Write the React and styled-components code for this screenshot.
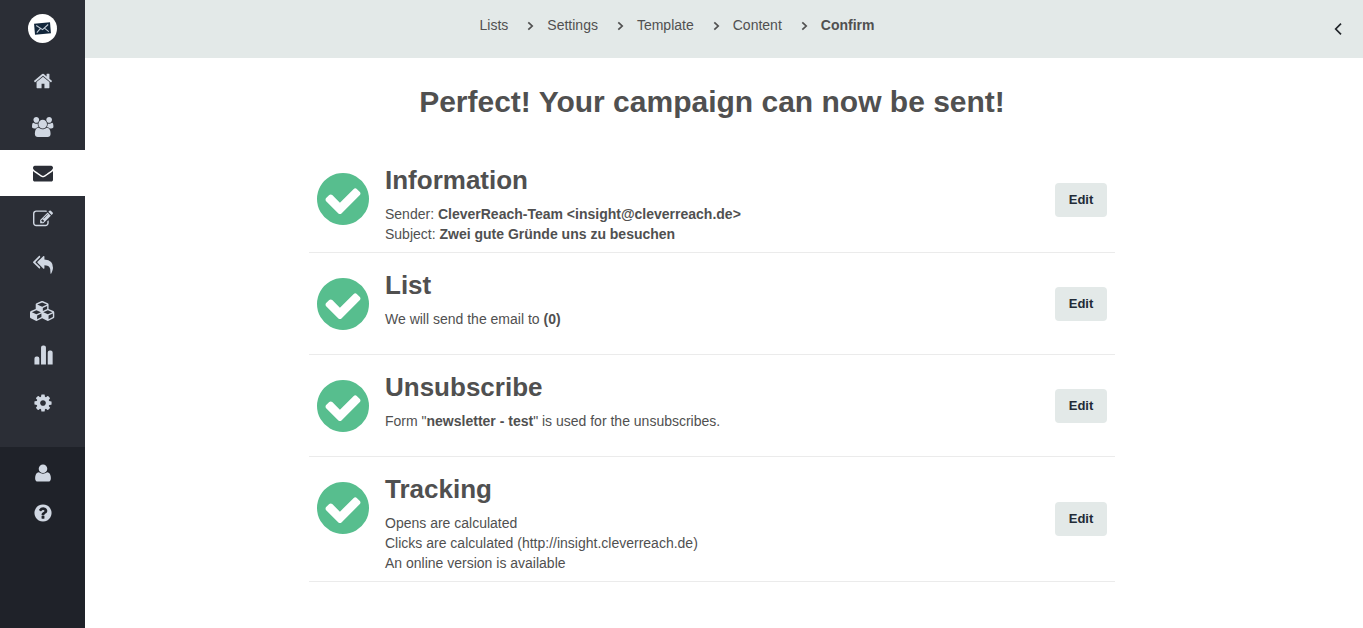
import React from 'react';
import styled, { createGlobalStyle } from 'styled-components';

const icons = {
  home: {
    width: 1792,
    d: 'M1472 992v480q0 26-19 45t-45 19h-384v-384h-256v384h-384q-26 0-45-19t-19-45v-480q0-1 .5-3t.5-3l575-474 575 474q1 2 1 6zm223-69l-62 74q-8 9-21 11h-3q-13 0-21-7l-692-577-692 577q-12 8-24 7-13-2-21-11l-62-74q-8-10-7-23.5t11-21.5l719-599q32-26 76-26t76 26l244 204v-195q0-14 9-23t23-9h192q14 0 23 9t9 23v408l219 182q10 8 11 21.5t-7 23.5z',
  },
  users: {
    width: 1920,
    d: 'M593 896q-162 5-265 128h-134q-82 0-138-40.5t-56-118.5q0-353 124-353 6 0 43.5 21t97.5 42.5 119 21.5q67 0 133-23-5 37-5 66 0 139 81 256zm1071 637q0 120-73 189.5t-194 69.5h-874q-121 0-194-69.5t-73-189.5q0-53 3.5-103.5t14-109 26.5-108.5 43-97.5 62-81 85.5-53.5 111.5-20q10 0 43 21.5t73 48 107 48 135 21.5 135-21.5 107-48 73-48 43-21.5q61 0 111.5 20t85.5 53.5 62 81 43 97.5 26.5 108.5 14 109 3.5 103.5zm-1024-1277q0 106-75 181t-181 75-181-75-75-181 75-181 181-75 181 75 75 181zm704 384q0 159-112.5 271.5t-271.5 112.5-271.5-112.5-112.5-271.5 112.5-271.5 271.5-112.5 271.5 112.5 112.5 271.5zm576 225q0 78-56 118.5t-138 40.5h-134q-103-123-265-128 81-117 81-256 0-29-5-66 66 23 133 23 59 0 119-21.5t97.5-42.5 43.5-21q124 0 124 353zm-128-609q0 106-75 181t-181 75-181-75-75-181 75-181 181-75 181 75 75 181z',
  },
  envelope: {
    width: 1792,
    d: 'M1792 710v794q0 66-47 113t-113 47h-1472q-66 0-113-47t-47-113v-794q44 49 101 87 362 246 497 345 57 42 92.5 65.5t94.5 48 110 24.5h2q51 0 110-24.5t94.5-48 92.5-65.5q170-123 498-345 57-39 100-87zm0-294q0 79-49 151t-122 123q-376 261-468 325-10 7-42.5 31t-54 38.5-52 32.5-57.5 27-50 9h-2q-23 0-50-9t-57.5-27-52-32.5-54-38.5-42.5-31q-91-64-262-182.5t-205-142.5q-62-42-117-115.5t-55-136.5q0-78 41.5-130t118.5-52h1472q65 0 112.5 47t47.5 113z',
  },
  edit: {
    width: 1792,
    d: 'M888 1184l116-116-152-152-116 116v56h96v96h56zm440-720q-16-16-33 1l-350 350q-17 17-1 33t33-1l350-350q17-17 1-33zm80 594v190q0 119-84.5 203.5t-203.5 84.5h-832q-119 0-203.5-84.5t-84.5-203.5v-832q0-119 84.5-203.5t203.5-84.5h832q63 0 117 25 15 7 18 23 3 17-9 29l-49 49q-14 14-32 8-23-6-45-6h-832q-66 0-113 47t-47 113v832q0 66 47 113t113 47h832q66 0 113-47t47-113v-126q0-13 9-22l64-64q15-15 35-7t20 29zm-96-738l288 288-672 672h-288v-288zm444 132l-92 92-288-288 92-92q28-28 68-28t68 28l152 152q28 28 28 68t-28 68z',
  },
  replyAll: {
    width: 1792,
    d: 'M640 1082v70q0 42-39 59-13 5-25 5-27 0-45-19l-512-512q-19-19-19-45t19-45l512-512q29-31 70-14 39 17 39 59v69l-397 398q-19 19-19 45t19 45zm1152 58q0 58-17 133.5t-38.5 138-48 125-40.5 90.5l-20 40q-8 17-28 17-6 0-9-1-25-8-23-34 43-400-106-565-64-71-170.5-110.5t-267.5-52.5v251q0 42-39 59-13 5-25 5-27 0-45-19l-512-512q-19-19-19-45t19-45l512-512q29-31 70-14 39 17 39 59v262q411 28 599 221 169 173 169 509z',
  },
  cubes: {
    width: 2304,
    d: 'M640 1632l384-192v-314l-384 164v342zm-64-454l404-173-404-173-404 173zm1088 454l384-192v-314l-384 164v342zm-64-454l404-173-404-173-404 173zm-448-293l384-165v-266l-384 164v267zm-64-379l441-189-441-189-441 189zm1088 518v416q0 36-19 67t-52 47l-448 224q-25 14-57 14t-57-14l-448-224q-5-2-7-4-2 2-7 4l-448 224q-25 14-57 14t-57-14l-448-224q-33-16-52-47t-19-67v-416q0-38 21.5-70t56.5-48l434-186v-400q0-38 21.5-70t56.5-48l448-192q23-10 50-10t50 10l448 192q35 16 56.5 48t21.5 70v400l434 186q36 16 57 48t21 70z',
  },
  chart: {
    width: 1792,
    d: 'M130 1560v-540q0-180 180-180h80q180 0 180 180v540zM720 1560v-1520q0-180 180-180h80q180 0 180 180v1520zM1320 1560v-1060q0-180 180-180h80q180 0 180 180v1060z',
  },
  cog: {
    width: 1792,
    d: 'M1152 896q0-106-75-181t-181-75-181 75-75 181 75 181 181 75 181-75 75-181zm512-109v222q0 12-8 23t-20 13l-185 28q-19 54-39 91 35 50 107 138 10 12 10 25t-9 23q-27 37-99 108t-94 71q-12 0-26-9l-138-108q-44 23-91 38-16 136-29 186-7 28-36 28h-222q-14 0-24.5-8.5t-11.5-21.5l-28-184q-49-16-90-37l-141 107q-10 9-25 9-14 0-25-11-126-114-165-168-7-10-7-23 0-12 8-23 15-21 51-66.5t54-70.5q-27-50-41-99l-183-27q-13-2-21-12.5t-8-23.5v-222q0-12 8-23t19-13l186-28q14-46 39-92-40-57-107-138-10-12-10-24 0-10 9-23 26-36 98.5-107.5t94.5-71.5q13 0 26 10l138 107q44-23 91-38 16-136 29-186 7-28 36-28h222q14 0 24.5 8.5t11.5 21.5l28 184q49 16 90 37l142-107q9-9 24-9 13 0 25 10 129 119 165 170 7 8 7 22 0 12-8 23-15 21-51 66.5t-54 70.5q26 50 41 98l183 28q13 2 21 12.5t8 23.5z',
  },
  user: {
    width: 1792,
    d: 'M1600 1399q0 109-62.5 187t-150.5 78h-982q-88 0-150.5-78t-62.5-187q0-85 8.5-160.5t31.5-152 58.5-131 94-89 134.5-34.5q195 128 377 128t377-128q76 0 134.5 34.5t94 89 58.5 131 31.5 152 8.5 160.5zm-320-887q0 159-112.5 271.5t-271.5 112.5-271.5-112.5-112.5-271.5 112.5-271.5 271.5-112.5 271.5 112.5 112.5 271.5z',
  },
  help: {
    width: 1792,
    d: 'M1024 1376v-192q0-14-9-23t-23-9h-192q-14 0-23 9t-9 23v192q0 14 9 23t23 9h192q14 0 23-9t9-23zm256-672q0-88-55.5-163t-138.5-116-170-41q-243 0-371 213-15 24 8 42l132 100q7 6 19 6 16 0 25-12 53-68 86-92 34-24 86-24 48 0 85.5 26t37.5 59q0 38-20 61t-68 45q-63 28-115.5 86.5t-52.5 125.5v36q0 14 9 23t23 9h192q14 0 23-9t9-23q0-19 21.5-49.5t54.5-49.5q32-18 49-28.5t46-35 44.5-48 28-60.5 12.5-81zm384 192q0 209-103 385.5t-279.5 279.5-385.5 103-385.5-103-279.5-279.5-103-385.5 103-385.5 279.5-279.5 385.5-103 385.5 103 279.5 279.5 103 385.5z',
  },
};

const mainLinks = [
  { icon: 'home', label: 'Dashboard' },
  { icon: 'users', label: 'Recipients' },
  { icon: 'envelope', label: 'Emails', active: true },
  { icon: 'edit', label: 'Forms' },
  { icon: 'replyAll', label: 'Automation' },
  { icon: 'cubes', label: 'Extras' },
  { icon: 'chart', label: 'Reports' },
  { icon: 'cog', label: 'Settings' },
];

const accountLinks = [
  { icon: 'user', label: 'Account' },
  { icon: 'help', label: 'Help' },
];

const steps = ['Lists', 'Settings', 'Template', 'Content', 'Confirm'];

const sections = [
  {
    title: 'Information',
    lines: [
      <>Sender: <b>CleverReach-Team &lt;insight@cleverreach.de&gt;</b></>,
      <>Subject: <b>Zwei gute Gründe uns zu besuchen</b></>,
    ],
  },
  {
    title: 'List',
    lines: [<>We will send the email to <b>(0)</b></>],
  },
  {
    title: 'Unsubscribe',
    lines: [<>Form "<b>newsletter - test</b>" is used for the unsubscribes.</>],
  },
  {
    title: 'Tracking',
    lines: [
      'Opens are calculated',
      'Clicks are calculated (http://insight.cleverreach.de)',
      'An online version is available',
    ],
  },
];

const Icon = ({ name }) => (
  <Glyph viewBox={`0 0 ${icons[name].width} 1792`} aria-hidden="true">
    <path d={icons[name].d} />
  </Glyph>
);

const Logo = () => (
  <svg width="29" height="29" viewBox="0 0 29 29" aria-hidden="true">
    <circle cx="14.5" cy="14.5" r="14.5" fill="#fff" />
    <g transform="rotate(-5 14.5 14.5)">
      <rect x="6.5" y="9" width="16" height="11" fill="#12263a" />
      <path d="M8.5 11l6 4.6 6-4.6M8.5 18.2l4-3.9M20.5 18.2l-4-3.9" fill="none" stroke="#c3ccd6" strokeWidth="1.1" />
    </g>
  </svg>
);

const Check = () => (
  <CheckIcon viewBox="128 128 1536 1536" aria-hidden="true">
    <path d="M1412 734q0-28-18-46l-91-90q-19-19-45-19t-45 19l-408 407-226-226q-19-19-45-19t-45 19l-91 90q-18 18-18 46 0 27 18 45l362 362q19 19 45 19 27 0 46-19l543-543q18-18 18-45zm252 162q0 209-103 385.5t-279.5 279.5-385.5 103-385.5-103-279.5-279.5-103-385.5 103-385.5 279.5-279.5 385.5-103 385.5 103 279.5 279.5 103 385.5z" />
  </CheckIcon>
);

const App = () => {
  return (
    <Page>
      <GlobalStyle />
      <Sidebar>
        <LogoLink href="#" aria-label="Start"><Logo /></LogoLink>
        <MainNav aria-label="Main">
          {mainLinks.map(({ icon, label, active }) => (
            <NavLink href="#" key={icon} aria-label={label} $active={active}>
              <Icon name={icon} />
            </NavLink>
          ))}
        </MainNav>
        <AccountNav aria-label="Account">
          {accountLinks.map(({ icon, label }) => (
            <NavLink href="#" key={icon} aria-label={label} $small>
              <Icon name={icon} />
            </NavLink>
          ))}
        </AccountNav>
      </Sidebar>
      <Content>
        <Topbar>
          <Steps>
            {steps.map((step, i) => (
              <Step key={step}>
                {i > 0 && (
                  <StepArrow viewBox="0 0 7 10" aria-hidden="true">
                    <path d="M1.3 1.3L5.2 5 1.3 8.7" />
                  </StepArrow>
                )}
                <StepLink href="#" $current={step === 'Confirm'}>{step}</StepLink>
              </Step>
            ))}
          </Steps>
          <CollapseButton type="button" aria-label="Open panel">
            <svg width="8" height="12" viewBox="0 0 8 12" aria-hidden="true">
              <path d="M7 .7L1.7 6 7 11.3" fill="none" stroke="#22262b" strokeWidth="1.7" />
            </svg>
          </CollapseButton>
        </Topbar>
        <Main>
          <Title>Perfect! Your campaign can now be sent!</Title>
          {sections.map(({ title, lines }) => (
            <Row key={title}>
              <Check />
              <RowBody>
                <RowTitle>{title}</RowTitle>
                {lines.map((line, i) => <Line key={i}>{line}</Line>)}
              </RowBody>
              <EditButton type="button">Edit</EditButton>
            </Row>
          ))}
        </Main>
      </Content>
    </Page>
  );
};

export default App;

const GlobalStyle = createGlobalStyle`
  * {
    box-sizing: border-box;
  }
  body {
    margin: 0;
    background: #fff;
    color: #505050;
    font: 14px/20px "Helvetica Neue", "Liberation Sans", Arial, sans-serif;
  }
`;

const Page = styled.div`
  display: flex;
  min-height: 100vh;
`;

const Sidebar = styled.aside`
  display: flex;
  flex-direction: column;
  flex: none;
  width: 85px;
  background: #2b2e36;
`;

const LogoLink = styled.a`
  display: flex;
  align-items: center;
  justify-content: center;
  height: 58px;
  padding-bottom: 1px;
`;

const MainNav = styled.nav`
  padding-bottom: 21px;
`;

const AccountNav = styled.nav`
  flex: 1;
  padding-top: 6px;
  background: #1f2229;
`;

const NavLink = styled.a`
  display: flex;
  align-items: center;
  justify-content: center;
  height: ${({ $small }) => ($small ? '40px' : '46px')};
  color: ${({ $active }) => ($active ? '#2b2e36' : '#d0d7e2')};
  background: ${({ $active }) => ($active ? '#fff' : 'transparent')};
`;

const Glyph = styled.svg`
  height: 20px;
  fill: currentColor;
  overflow: visible;
`;

const Content = styled.div`
  flex: 1;
  min-width: 0;
`;

const Topbar = styled.header`
  display: flex;
  height: 58px;
  background: #e3e9e8;
`;

const Steps = styled.ol`
  display: flex;
  flex: 1;
  justify-content: center;
  margin: 0;
  padding: 15px 44px 0 0;
  list-style: none;
`;

const Step = styled.li`
  display: flex;
  align-items: center;
  height: 20px;
`;

const StepArrow = styled.svg`
  width: 7px;
  height: 10px;
  margin: 1px 13px 0 19px;
  fill: none;
  stroke: #505050;
  stroke-width: 1.7;
`;

const StepLink = styled.a`
  color: #505050;
  font-weight: ${({ $current }) => ($current ? 'bold' : 'normal')};
  text-decoration: none;
`;

const CollapseButton = styled.button`
  display: flex;
  align-items: center;
  justify-content: center;
  width: 50px;
  padding: 0;
  border: 0;
  background: none;
`;

const Main = styled.main`
  max-width: 830px;
  margin: 0 auto;
  padding: 24px 24px 24px 0;
`;

const Title = styled.h1`
  margin: 0 0 26px;
  font-size: 30px;
  line-height: 40px;
  text-align: center;
`;

const Row = styled.section`
  display: flex;
  align-items: center;
  min-height: 102px;
  padding: 0 8px;
  border-bottom: 1px solid #ebebeb;
`;

const CheckIcon = styled.svg`
  flex: none;
  align-self: flex-start;
  width: 52px;
  height: 52px;
  margin: 25px 16px 0 0;
  fill: #57be8e;
`;

const RowBody = styled.div`
  flex: 1;
  align-self: flex-start;
  padding: 16px 0 8px;
`;

const RowTitle = styled.h2`
  margin: 0 0 8px;
  font-size: 26px;
  line-height: 32px;
`;

const Line = styled.p`
  margin: 0;
`;

const EditButton = styled.button`
  width: 52px;
  height: 34px;
  padding: 0;
  border: 0;
  border-radius: 4px;
  background: #e3e9e8;
  color: #222b37;
  font: bold 13px/20px "Helvetica Neue", "Liberation Sans", Arial, sans-serif;
`;
